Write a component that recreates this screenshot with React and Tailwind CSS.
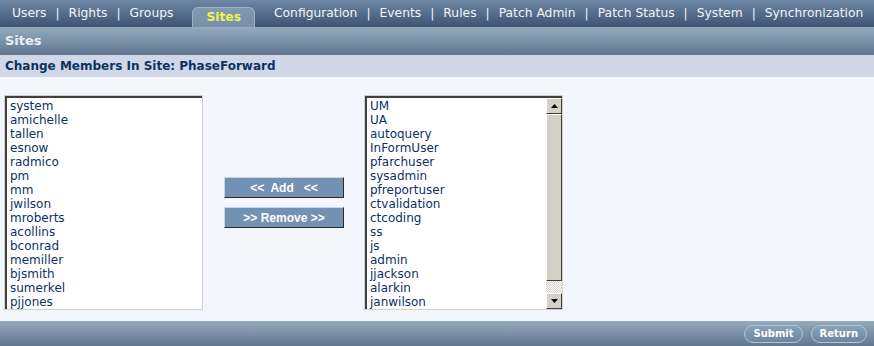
import React from 'react';

const available = ['system', 'amichelle', 'tallen', 'esnow', 'radmico', 'pm', 'mm', 'jwilson', 'mroberts', 'acollins', 'bconrad', 'memiller', 'bjsmith', 'sumerkel', 'pjjones'];

const members = ['UM', 'UA', 'autoquery', 'InFormUser', 'pfarchuser', 'sysadmin', 'pfreportuser', 'ctvalidation', 'ctcoding', 'ss', 'js', 'admin', 'jjackson', 'alarkin', 'janwilson'];

const Sep = () => <span className="px-[9px]">|</span>;

const ArrowBtn = ({ down }) => (
    <div className="w-4 h-4 bg-[#d4d0c8] border border-t-white border-l-white border-r-[#404040] border-b-[#404040] flex items-center justify-center">
        <svg width="7" height="4" viewBox="0 0 7 4">
            {down ? <path d="M0 0h7L3.5 4z" fill="#000" /> : <path d="M0 4h7L3.5 0z" fill="#000" />}
        </svg>
    </div>
);

const ListBox = ({ items, scroll }) => (
    <div className="w-[199px] h-[215px] border border-[#d4d0c8] bg-white">
        <div className="h-full border-t-2 border-l-2 border-[#404040] flex">
            <div className="flex-1 pl-[3px] pt-[1px] overflow-hidden">
                {items.map((item) => (
                    <div key={item} className="h-[14px] leading-[14px] text-[12px] text-[#0c3262]">
                        {item}
                    </div>
                ))}
            </div>
            {scroll && (
                <div className="w-4 flex flex-col">
                    <ArrowBtn />
                    <div className="h-[167px] bg-[#d4d0c8] border border-t-white border-l-white border-r-[#404040] border-b-[#404040]"></div>
                    <div className="flex-1 bg-[repeating-conic-gradient(#d4d0c8_0_25%,#ffffff_0_50%)] bg-[length:2px_2px]"></div>
                    <ArrowBtn down />
                </div>
            )}
        </div>
    </div>
);

const MoveButton = ({ label }) => (
    <button className="w-[120px] h-[21px] bg-[#7391b2] border border-t-[#c8d4e0] border-l-[#c8d4e0] border-r-[#2a2a2a] border-b-[#2a2a2a] text-white font-bold text-[12px] whitespace-pre font-['Liberation_Sans',sans-serif] leading-none">
        {label}
    </button>
);

const PillButton = ({ label }) => (
    <button className="h-[18px] px-[8px] rounded-full bg-gradient-to-b from-[#8aa2ba] to-[#6d86a0] border border-[#b4c4d4] text-white font-bold text-[10px] leading-none">
        {label}
    </button>
);

export default function App() {
    return (
        <div className="w-[874px] h-[346px] flex flex-col font-['DejaVu_Sans',sans-serif] bg-[#f4f6fd] overflow-hidden">
            {/* Top nav */}
            <div className="h-[27px] bg-gradient-to-b from-[#6e87a5] to-[#3d5573] flex items-end pl-[12px] text-[12.3px] text-[#f0f4f8] whitespace-nowrap">
                <div className="flex items-center h-[27px]">
                    <span>Users</span><Sep />
                    <span>Rights</span><Sep />
                    <span>Groups</span>
                </div>
                <div className="ml-[19px] mr-[19px] h-[20px] px-[13px] rounded-t-[6px] bg-gradient-to-b from-[#8199b3] to-[#7790aa] border-t border-l border-r border-[#9fb2c6] flex items-center text-[#f4f44a] font-bold">
                    Sites
                </div>
                <div className="flex items-center h-[27px]">
                    <span>Configuration</span><Sep />
                    <span>Events</span><Sep />
                    <span>Rules</span><Sep />
                    <span>Patch Admin</span><Sep />
                    <span>Patch Status</span><Sep />
                    <span>System</span><Sep />
                    <span>Synchronization</span>
                </div>
            </div>

            {/* Section header */}
            <div className="h-[28px] bg-gradient-to-b from-[#95abbf] to-[#62778f] flex items-center pl-[5px] text-[13px] font-bold text-[#eaeef3]">
                Sites
            </div>
            <div className="h-[22px] bg-[#d0d8e8] flex items-center pl-[5px] text-[12px] font-bold text-[#0c3262]">
                Change Members In Site: PhaseForward
            </div>

            {/* Content */}
            <div className="flex-1 flex items-center pl-[4px] pt-[18px] pb-[11px]">
                <ListBox items={available} />
                <div className="ml-[21px] mr-[20px] flex flex-col gap-[9px]">
                    <MoveButton label="<<  Add   <<" />
                    <MoveButton label=">> Remove >>" />
                </div>
                <ListBox items={members} scroll />
            </div>

            {/* Footer */}
            <div className="h-[25px] bg-gradient-to-b from-[#95abbf] to-[#62778f] flex items-center justify-end gap-[8px] pr-[7px]">
                <PillButton label="Submit" />
                <PillButton label="Return" />
            </div>
        </div>
    );
}
